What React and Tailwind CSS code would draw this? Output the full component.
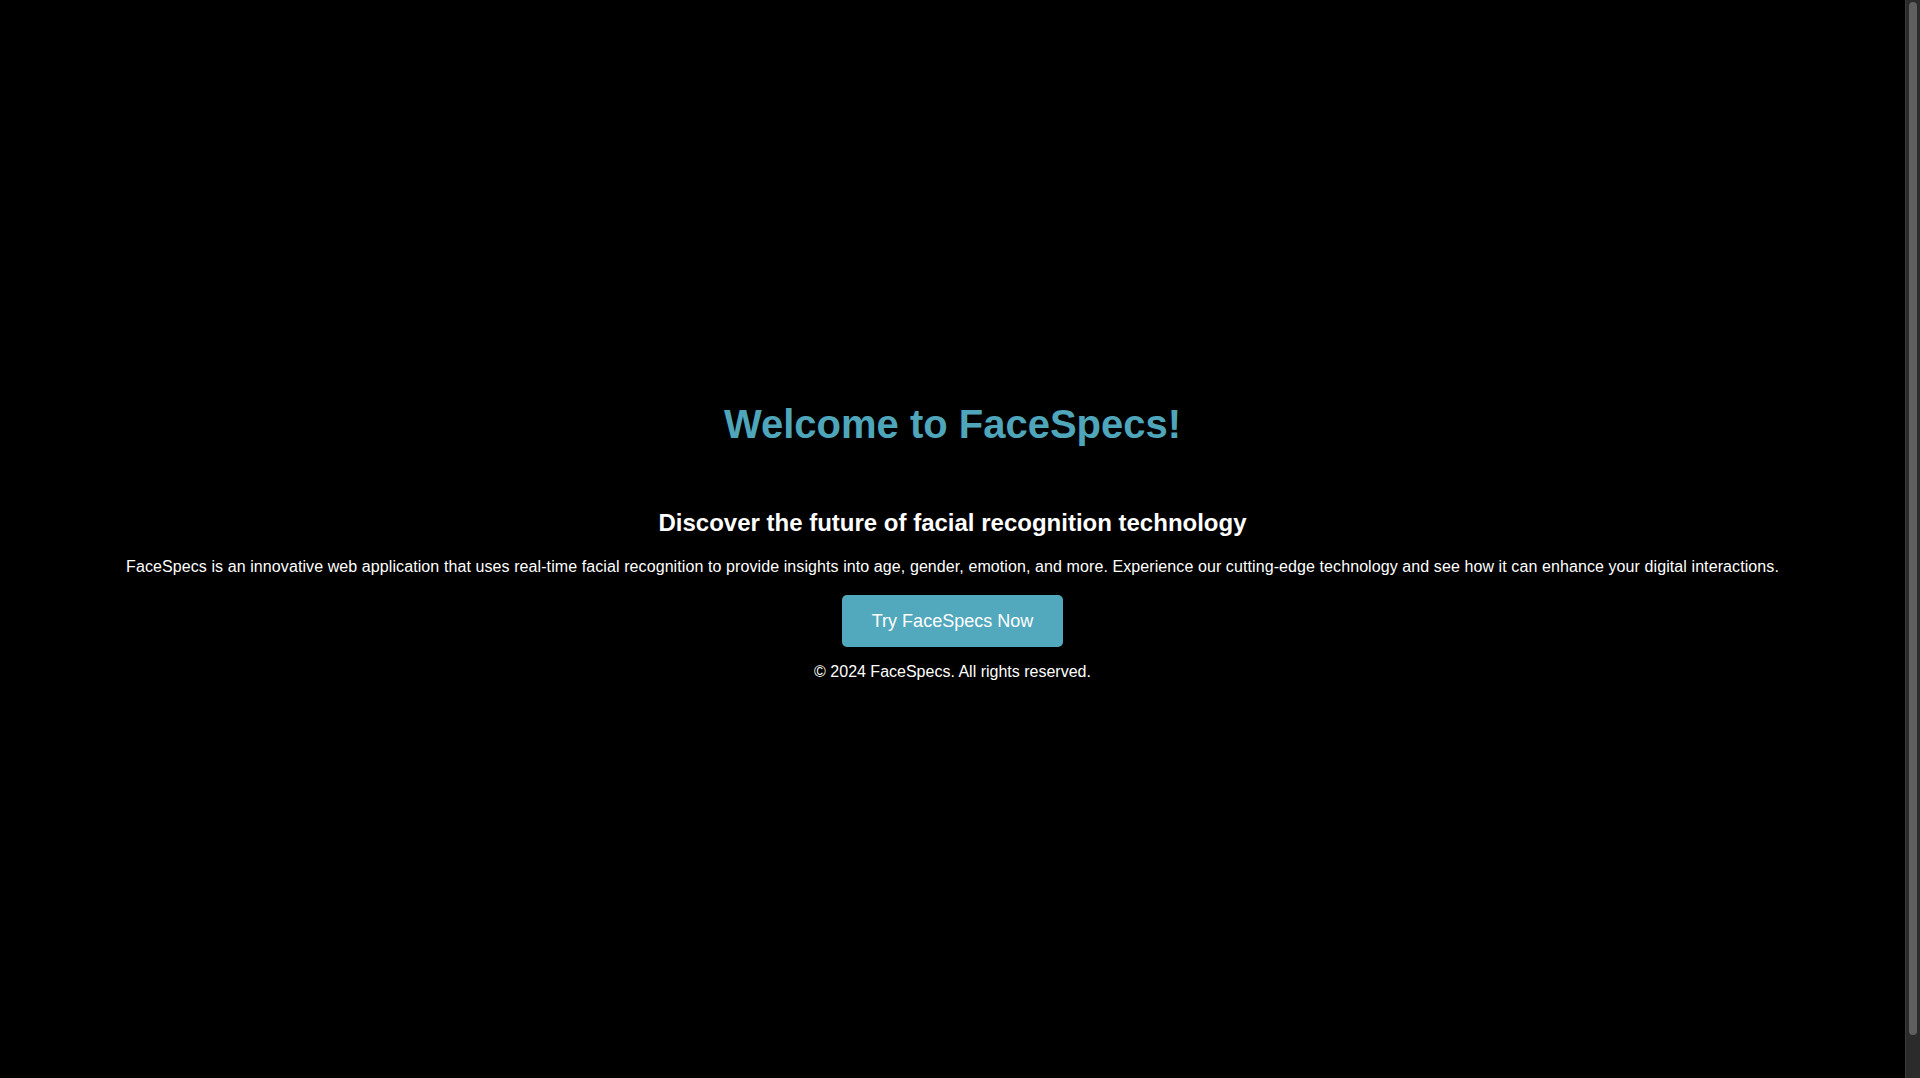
export default function App() {
  return (
    <div className="flex h-screen overflow-hidden bg-black text-white font-['Liberation_Sans',Arial,sans-serif]">
      <div className="flex-1 h-[1122px] pt-[401px] text-center">
        <header>
          <h1 className="text-[40px] leading-[46px] font-bold text-[#4fa6bb]">
            Welcome to FaceSpecs!
          </h1>
        </header>
        <main className="mt-[62px]">
          <h2 className="text-[24px] leading-[28px] font-bold">
            Discover the future of facial recognition technology
          </h2>
          <p className="mt-[21px] text-[16px] leading-[18px] tracking-[0.09px]">
            FaceSpecs is an innovative web application that uses real-time facial recognition to provide
            insights into age, gender, emotion, and more. Experience our cutting-edge technology and see how
            it can enhance your digital interactions.
          </p>
          <button className="mt-[19px] h-[52px] px-[30px] rounded-[5px] bg-[#52a8bc] text-[18px] leading-[21px] text-white">
            Try FaceSpecs Now
          </button>
        </main>
        <footer className="mt-[16px] text-[16px] leading-[18px]">
          © 2024 FaceSpecs. All rights reserved.
        </footer>
      </div>
      {/* page scrollbar */}
      <div className="w-[15px] h-full shrink-0 bg-[#2b2b2b] border-l border-[#3b3b3b] pt-[2px]">
        <div className="mx-auto w-[8px] h-[1033px] rounded-full bg-[#5f5f5f]"></div>
      </div>
    </div>
  );
}
